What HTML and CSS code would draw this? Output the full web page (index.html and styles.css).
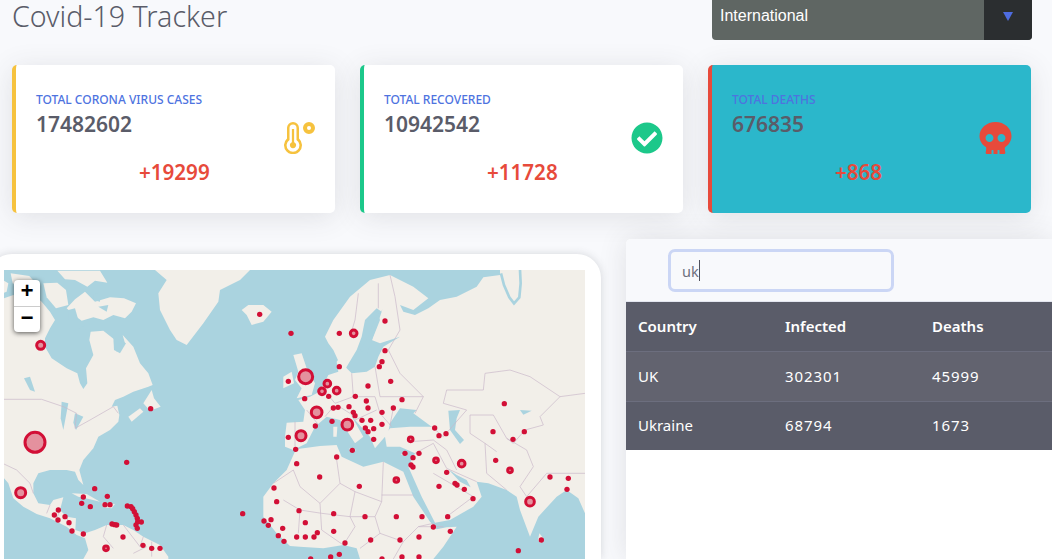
FILE: index.html
```html
<!DOCTYPE html>
<html lang="en">
<head>
<meta charset="utf-8">
<title>Covid-19 Tracker</title>
<link rel="stylesheet" href="styles.css">
</head>
<body>
<div class="page">
  <header class="topbar">
    <h1 class="title">Covid-19 Tracker</h1>
    <div class="picker"><span class="picker-label">International</span><span class="picker-arrow"><svg width="10" height="9" viewBox="0 0 10 9"><path d="M0 0H10L5 9Z"/></svg></span></div>
  </header>

  <section class="stats">
    <article class="stat stat-yellow">
      <div class="stat-text">
        <div class="stat-label">Total Corona Virus Cases</div>
        <div class="stat-value">17482602</div>
        <div class="stat-delta">+19299</div>
      </div>
      <svg class="stat-icon icon-yellow" viewBox="16 0 496 512"><path fill-rule="evenodd" d="M416 0a96 96 0 1 0 0 192a96 96 0 1 0 0-192zM416 64a32 32 0 1 1 0 64a32 32 0 1 1 0-64zM160 0a96 96 0 0 0-96 96V264A144 144 0 1 0 256 264V96A96 96 0 0 0 160 0zM160 40a56 56 0 0 1 56 56V288A102 102 0 1 1 104 288V96a56 56 0 0 1 56-56zM142 112h36V322a50 50 0 1 1-36 0z"/></svg>
    </article>
    <article class="stat stat-green">
      <div class="stat-text">
        <div class="stat-label">Total Recovered</div>
        <div class="stat-value">10942542</div>
        <div class="stat-delta">+11728</div>
      </div>
      <svg class="stat-icon icon-green" viewBox="0 0 512 512"><path d="M504 256c0 136.967-111.033 248-248 248S8 392.967 8 256 119.033 8 256 8s248 111.033 248 248zM227.314 387.314l184-184c6.248-6.248 6.248-16.379 0-22.627l-22.627-22.627c-6.248-6.249-16.379-6.249-22.628 0L216 308.118l-70.059-70.059c-6.248-6.248-16.379-6.248-22.628 0l-22.627 22.627c-6.248 6.248-6.248 16.379 0 22.627l104 104c6.249 6.249 16.379 6.249 22.628.001z"/></svg>
    </article>
    <article class="stat stat-red">
      <div class="stat-text">
        <div class="stat-label">Total Deaths</div>
        <div class="stat-value">676835</div>
        <div class="stat-delta">+868</div>
      </div>
      <svg class="stat-icon icon-red" viewBox="0 0 512 512"><path d="M256 0C114.6 0 0 100.3 0 224c0 70.1 36.9 132.6 94.5 173.7 9.6 6.9 15.2 18.1 13.5 29.9l-9.4 66.2c-1.4 9.6 6 18.2 15.7 18.2H192v-56c0-4.4 3.6-8 8-8h16c4.4 0 8 3.6 8 8v56h64v-56c0-4.4 3.6-8 8-8h16c4.4 0 8 3.6 8 8v56h77.7c9.7 0 17.1-8.6 15.7-18.2l-9.4-66.2c-1.7-11.7 3.8-23 13.5-29.9C475.1 356.6 512 294.1 512 224 512 100.3 397.4 0 256 0zm-96 320c-35.3 0-64-28.7-64-64s28.7-64 64-64 64 28.7 64 64-28.7 64-64 64zm192 0c-35.3 0-64-28.7-64-64s28.7-64 64-64 64 28.7 64 64-28.7 64-64 64z"/></svg>
    </article>
  </section>

  <section class="lower">
    <div class="map-card">
      <div class="map">
        <svg class="map-art" viewBox="12 90 1743 867" width="581" height="289">
          <g class="land">
            <path d="M12,175L40,165L70,180L95,160L125,185L150,215L165,240L150,265L135,295L135,320L155,355L200,385L232,400L240,430L250,447L262,430L258,385L280,345L268,300L272,275L310,272L345,300L350,335L375,310L368,285L400,320L420,370L445,400L458,435L445,440L400,455L370,470L345,480L335,500L352,497L358,525L355,545L330,570L295,590L280,625L250,660L238,690L250,735L235,720L225,695L200,690L150,690L115,700L100,730L100,760L115,790L150,795L160,780L190,772L180,810L200,830L228,835L226,870L255,880L285,870L320,855L370,855L400,870L430,890L480,915L505,950L505,957L250,957L265,930L255,895L230,885L200,860L150,835L110,822L70,800L40,775L25,730L12,715Z"/>
            <path d="M385,530L420,505L430,515L395,545Z"/>
            <path d="M430,490L455,450L462,475L482,500L450,512Z"/>
            <path d="M200,205L225,178L255,155L285,185L330,172L372,175L408,190L395,215L375,235L340,225L310,240L280,232L245,242L222,225Z"/>
            <path d="M172,92L300,92L322,128L285,122L262,140L225,120L195,118Z"/>
            <path d="M32,100L88,108L112,135L75,148L38,130Z"/>
            <path d="M12,122L25,130L20,155L12,158Z"/>
            <path d="M130,130L172,128L198,150L205,195L168,205L140,172Z"/>
            <path d="M465,90L750,90L720,120L660,150L655,185L610,250L560,315L530,300L510,270L480,210L475,160L500,120Z"/>
            <path d="M725,210L745,195L790,195L815,215L790,245L755,255L740,225Z"/>
            <path d="M215,760L260,762L300,785L270,778L235,770Z"/>
            <path d="M305,788L345,792L335,805L310,802Z"/>
            <path d="M850,410L875,395L882,430L850,445Z"/>
            <path d="M880,345L905,340L920,385L945,430L935,465L890,475L905,445L885,420L895,395Z"/>
          </g>
          <g class="land" transform="translate(900,0)">
            <path d="M-45,590L-40,548L10,545L15,510L-5,480L30,470L50,460L70,435L85,405L115,395L110,365L125,345L140,385L155,400L200,395L225,380L235,350L250,320L300,290L240,310L215,300L230,260L245,215L230,205L195,240L185,290L170,330L140,380L130,395L100,330L85,310L75,290L100,240L150,170L210,120L270,105L340,140L385,175L340,210L300,195L310,215L345,225L385,205L420,180L470,170L530,140L550,112L600,105L600,90L855,90L855,820L835,775L800,750L770,770L715,830L690,890L660,810L650,770L620,750L565,730L530,725L545,770L520,800L450,840L405,848L365,770L325,680L345,640L300,620L260,620L255,590L270,565L330,560L395,560L340,520L350,510L300,505L270,550L265,575L255,590L225,625L210,590L165,540L150,520L190,590L165,610L120,540L80,530L45,560L20,610L-20,630L-45,620Z"/>
            <path d="M-12,628L60,618L110,615L125,650L190,680L250,665L310,695L340,770L390,845L410,868L440,862L470,860L430,920L400,957L180,957L170,925L130,915L70,925L0,920L-30,918L-70,880L-110,830L-110,770L-80,730L-40,690Z"/>
            <path d="M718,880L730,895L722,910L714,900Z"/>
            <path d="M148,625L170,630L150,635Z"/>
            <path d="M100,560L112,560L110,590L100,590Z"/>
            <path d="M302,643L322,636L320,648Z"/>
          </g>
          <g class="water" transform="translate(900,0)">
            <path d="M480,510L445,512L450,570L480,612L492,600L465,570L470,535Z"/>
            <path d="M445,688L480,725L512,742L500,720L470,705Z"/>
            <path d="M180,330L200,300L232,215L240,240L220,290L200,345Z"/>
            <path d="M248,208L215,262L222,240Z"/>
            <path d="M660,510L695,512L670,524Z"/>
            <path class="water-line" d="M603,100L612,135L628,172L642,190L658,172L662,130L660,90"/>
          </g>
          <g class="water">
            <path d="M72,415L90,410L105,455L90,450Z"/>
            <path d="M185,485L205,490L190,570L182,535Z"/>
            <path d="M225,520L250,530L228,570L220,548Z"/>
            <path d="M340,292L378,310L360,340L342,330Z"/>
            <path d="M280,165L300,155L300,185L280,180Z"/>
            <path d="M235,265L270,250L255,270Z"/>
            <path d="M205,210L225,205L235,240L205,240Z"/>
            <path d="M295,200L325,195L320,215Z"/>
          </g>
          <g class="borders">
            <path d="M12,478H125L190,500L230,520L225,565L270,540L340,500L355,520"/>
            <path d="M12,672L50,690L90,730L100,760"/>
            <path d="M150,795L140,820M180,810L170,835M200,830L210,860"/>
            <path d="M320,855L310,890L340,925M370,855L420,920L430,890M455,905V950M400,940L440,920"/>
          </g>
          <g class="borders" transform="translate(900,0)">
            <path d="M175,160L165,240L150,290M235,130L235,205M270,105L285,170L300,270L265,330L300,400L370,470L345,520"/>
            <path d="M155,400L160,470L105,490M225,380L240,470L370,470M160,470L225,470L240,520L275,560M110,495L150,520M165,540L230,510M280,505L270,555"/>
            <path d="M395,560L430,590L500,510L430,490L440,450L550,450L555,400L630,390L690,410L780,470L855,460M780,470L720,530L730,555L675,570L640,610L620,595L580,525L510,525L510,580L555,610L590,635M555,610L560,700L620,750M620,595L680,630L700,680L660,740L680,770L740,700L855,700"/>
            <path d="M330,605L400,600L440,630L470,690M345,640L400,610L440,685L530,725M400,700L520,770M520,770L440,830"/>
            <path d="M110,660L120,730L60,790L0,740L-20,690M120,730L165,755L245,785L250,665M165,755L150,830L165,860M245,765H340M245,785L225,830L240,880L310,905L355,860L400,850M60,790L65,870M150,830L65,820L0,810L-50,780M-20,690L-80,730M0,810L-5,880M65,870L130,915M165,860L130,915M225,830L150,830M310,905L280,957M355,860L430,860M180,925L240,880"/>
            <path d="M-15,545L-15,620M20,510L60,560M80,460L105,490M75,530L105,495"/>
          </g>
          <g class="dots">
            <circle cx="779" cy="223" r="7"/><circle cx="873" cy="280" r="7"/><circle cx="865" cy="424" r="7"/><circle cx="452" cy="506" r="7"/><circle cx="380" cy="667" r="7"/><circle cx="284" cy="746" r="7"/><circle cx="322" cy="769" r="7"/><circle cx="250" cy="771" r="7"/><circle cx="245" cy="790" r="7"/><circle cx="271" cy="800" r="7"/><circle cx="315" cy="794" r="7"/><circle cx="330" cy="794" r="7"/><circle cx="175" cy="810" r="7"/><circle cx="163" cy="825" r="7"/><circle cx="174" cy="840" r="7"/><circle cx="195" cy="830" r="7"/><circle cx="207" cy="848" r="7"/><circle cx="216" cy="873" r="7"/><circle cx="250" cy="882" r="7"/><circle cx="336" cy="852" r="7"/><circle cx="344" cy="854" r="7"/><circle cx="350" cy="855" r="7"/><circle cx="369" cy="891" r="7"/><circle cx="429" cy="916" r="7"/><circle cx="455" cy="925" r="7"/><circle cx="480" cy="925" r="7"/><circle cx="382" cy="798" r="7"/><circle cx="393" cy="800" r="7"/><circle cx="398" cy="806" r="7"/><circle cx="403" cy="815" r="7"/><circle cx="408" cy="825" r="7"/><circle cx="412" cy="835" r="7"/><circle cx="424" cy="846" r="7"/><circle cx="408" cy="855" r="7"/><circle cx="412" cy="865" r="7"/><circle cx="413" cy="845" r="7"/><circle cx="728" cy="821" r="7"/><circle cx="822" cy="744" r="7"/><circle cx="830" cy="785" r="7"/><circle cx="792" cy="843" r="7"/><circle cx="813" cy="839" r="7"/><circle cx="805" cy="856" r="7"/><circle cx="848" cy="865" r="7"/><circle cx="835" cy="887" r="7"/><circle cx="852" cy="904" r="7"/><circle cx="890" cy="891" r="7"/><circle cx="865" cy="592" r="7"/><circle cx="887" cy="628" r="7"/><circle cx="890" cy="671" r="7"/><circle cx="897" cy="812" r="7"/>
          </g>
          <g class="dots" transform="translate(900,0)">
            <circle cx="255" cy="243" r="7"/><circle cx="118" cy="280" r="7"/><circle cx="255" cy="332" r="7"/><circle cx="246" cy="365" r="7"/><circle cx="238" cy="380" r="7"/><circle cx="118" cy="380" r="7"/><circle cx="272" cy="424" r="7"/><circle cx="204" cy="438" r="7"/><circle cx="86" cy="469" r="7"/><circle cx="14" cy="476" r="7"/><circle cx="166" cy="469" r="7"/><circle cx="199" cy="483" r="7"/><circle cx="306" cy="479" r="7"/><circle cx="280" cy="504" r="7"/><circle cx="204" cy="504" r="7"/><circle cx="147" cy="500" r="7"/><circle cx="100" cy="504" r="7"/><circle cx="114" cy="502" r="7"/><circle cx="160" cy="517" r="7"/><circle cx="165" cy="527" r="7"/><circle cx="246" cy="517" r="7"/><circle cx="186" cy="541" r="7"/><circle cx="212" cy="541" r="7"/><circle cx="96" cy="544" r="7"/><circle cx="46" cy="558" r="7"/><circle cx="196" cy="564" r="7"/><circle cx="246" cy="553" r="7"/><circle cx="221" cy="566" r="7"/><circle cx="204" cy="575" r="7"/><circle cx="221" cy="598" r="7"/><circle cx="404" cy="564" r="7"/><circle cx="417" cy="587" r="7"/><circle cx="438" cy="581" r="7"/><circle cx="157" cy="631" r="7"/><circle cx="110" cy="651" r="7"/><circle cx="315" cy="640" r="7"/><circle cx="357" cy="640" r="7"/><circle cx="339" cy="653" r="7"/><circle cx="333" cy="675" r="7"/><circle cx="339" cy="681" r="7"/><circle cx="59" cy="711" r="7"/><circle cx="178" cy="739" r="7"/><circle cx="440" cy="697" r="7"/><circle cx="417" cy="739" r="7"/><circle cx="465" cy="730" r="7"/><circle cx="471" cy="735" r="7"/><circle cx="493" cy="748" r="7"/><circle cx="519" cy="776" r="7"/><circle cx="750" cy="711" r="7"/><circle cx="805" cy="715" r="7"/><circle cx="801" cy="748" r="7"/><circle cx="613" cy="491" r="7"/><circle cx="579" cy="575" r="7"/><circle cx="673" cy="575" r="7"/><circle cx="639" cy="598" r="7"/><circle cx="587" cy="661" r="7"/><circle cx="101" cy="821" r="7"/><circle cx="16" cy="848" r="7"/><circle cx="195" cy="830" r="7"/><circle cx="289" cy="830" r="7"/><circle cx="366" cy="830" r="7"/><circle cx="443" cy="830" r="7"/><circle cx="400" cy="861" r="7"/><circle cx="451" cy="874" r="7"/><circle cx="101" cy="874" r="7"/><circle cx="52" cy="878" r="7"/><circle cx="16" cy="891" r="7"/><circle cx="42" cy="891" r="7"/><circle cx="135" cy="909" r="7"/><circle cx="212" cy="900" r="7"/><circle cx="300" cy="900" r="7"/><circle cx="357" cy="891" r="7"/><circle cx="118" cy="943" r="7"/><circle cx="92" cy="951" r="7"/><circle cx="32" cy="957" r="7"/><circle cx="246" cy="957" r="7"/><circle cx="306" cy="951" r="7"/><circle cx="357" cy="951" r="7"/><circle cx="724" cy="900" r="7"/><circle cx="655" cy="932" r="7"/>
          </g>
          <g class="rings">
            <circle cx="122" cy="316" r="12"/><circle cx="105" cy="607" r="30"/><circle cx="62" cy="758" r="15"/><circle cx="318" cy="925" r="7"/>
          </g>
          <g class="rings" transform="translate(900,0)">
            <circle cx="161" cy="280" r="10"/><circle cx="17" cy="410" r="21"/><circle cx="82" cy="431" r="10"/><circle cx="66" cy="454" r="10"/><circle cx="110" cy="452" r="10"/><circle cx="50" cy="517" r="16"/><circle cx="142" cy="554" r="16"/><circle cx="332" cy="598" r="7"/><circle cx="408" cy="661" r="7"/><circle cx="485" cy="671" r="10"/><circle cx="630" cy="691" r="7"/><circle cx="289" cy="720" r="7"/><circle cx="690" cy="785" r="13"/><circle cx="3" cy="587" r="15"/>
          </g>
        </svg>
        <div class="zoom"><span class="zoom-btn">+</span><span class="zoom-btn">−</span></div>
      </div>
    </div>

    <div class="panel">
      <div class="panel-head">
        <div class="search"><span>uk</span><span class="caret"></span></div>
      </div>
      <table class="table">
        <thead>
          <tr><th>Country</th><th>Infected</th><th>Deaths</th></tr>
        </thead>
        <tbody>
          <tr class="odd"><td>UK</td><td class="num">302301</td><td class="num">45999</td></tr>
          <tr class="last"><td>Ukraine</td><td class="num">68794</td><td class="num">1673</td></tr>
        </tbody>
      </table>
    </div>
  </section>
</div>
</body>
</html>
```

FILE: styles.css
```css
* { box-sizing: border-box; }
html, body { margin: 0; height: 559px; overflow: hidden; background: #f8f9fc; }
body { font-family: "Noto Sans", "Open Sans", sans-serif; color: #5a5c69; }
.page { width: 1052px; height: 559px; overflow: hidden; padding: 0 20px 0 12px; }

.topbar { display: flex; justify-content: space-between; height: 40px; margin-bottom: 25px; }
.title { margin: 0; font-size: 28.6px; line-height: 32px; font-weight: 300; color: #5a5c69; }
.picker { width: 320px; height: 40px; display: flex; justify-content: space-between; background: #5f6663; border-radius: 0 0 4px 4px; overflow: hidden; }
.picker-label { padding: 6px 8px; font: 16px/20px "Liberation Sans", sans-serif; color: #fff; }
.picker-arrow { width: 48px; background: #2b2e30; display: flex; align-items: center; justify-content: center; padding-bottom: 8px; }
.picker-arrow svg { fill: #4e6ce0; }

.stats { display: grid; grid-template-columns: repeat(3, 323px); gap: 25px; margin-bottom: 26px; }
.stat { height: 148px; display: flex; justify-content: space-between; padding: 28px 19px 0 20px; background: #fff; border-left: 4px solid; border-radius: 5px; box-shadow: 0 4px 28px rgba(58, 59, 69, .13); }
.stat-yellow { border-color: #f6c23e; }
.stat-green { border-color: #1cc88a; }
.stat-red { border-color: #e74a3b; background: #2bb7cb; }
.stat-label { font-size: 12px; line-height: 14px; font-weight: 500; text-transform: uppercase; color: #4e73df; }
.stat-value { font-size: 21px; line-height: 24px; margin-top: 5px; font-weight: 600; color: #5a5c69; }
.stat-delta { font-size: 20.6px; line-height: 24px; margin: 24px 0 0 103px; font-weight: 600; color: #e74a3b; }
.stat-icon { width: 32px; height: 32px; margin-top: 29px; }
.icon-yellow { fill: #f6c23e; width: 33px; }
.icon-green { fill: #1cc88a; margin-right: 1px; }
.icon-red { fill: #e74a3b; width: 33px; }

.lower { display: flex; align-items: flex-start; gap: 25px; margin: 0 -20px 0 -24px; }
.map-card { flex: 0 0 613px; margin-top: 15px; padding: 16px 16px 0; background: #fff; border-radius: 24px 24px 0 0; box-shadow: 0 0 8px rgba(58, 59, 69, .18); }
.map { position: relative; width: 581px; height: 289px; background: #aad3df; overflow: hidden; }
.map-art { display: block; }
.land path { fill: #f2efe9; stroke: none; }
.water path { fill: #aad3df; stroke: none; }
.water .water-line { fill: none; stroke: #aad3df; stroke-width: 8; }
.borders path { fill: none; stroke: #c9b6c9; stroke-width: 2; }
.dots circle { fill: #d20f36; r: 8px; }
.rings circle { fill: rgba(210, 15, 54, .42); stroke: #d20f36; stroke-width: 9; }
.zoom { position: absolute; left: 10px; top: 10px; width: 26px; display: flex; flex-direction: column; border-radius: 4px; background: #fff; box-shadow: 0 1px 5px rgba(0, 0, 0, .65); }
.zoom-btn { height: 26px; font: 700 22px/26px "Liberation Mono", monospace; text-align: center; color: #000; }
.zoom-btn + .zoom-btn { border-top: 1px solid #ccc; }

.panel { flex: 0 0 426px; height: 320px; background: #fff; border-radius: 5px 0 0 0; overflow: hidden; box-shadow: 0 0 28px rgba(58, 59, 69, .13); }
.panel-head { height: 63px; padding: 10px 0 0 42px; background: #f8f9fc; border-bottom: 1px solid #e3e6f0; }
.search { width: 226px; height: 43px; display: flex; align-items: center; padding-left: 11px; background: #f8f9fc; border: 3px solid #cbd6f5; border-radius: 7px; font-size: 14.5px; color: #6e707e; }
.caret { width: 1px; height: 21px; background: #50525e; }
.table { width: 426px; table-layout: fixed; border-collapse: collapse; color: #fff; background: #5a5c69; font-size: 15px; }
.table th, .table td { width: 147px; padding: 0 12px; text-align: left; line-height: 22px; }
.table th { height: 49px; font-size: 15px; font-weight: 600; }
.table td { height: 50px; border-top: 1px solid #6c6e7e; font-weight: 400; }
.table .last td { height: 49px; padding-bottom: 2px; }
.table .num { letter-spacing: .9px; }
.odd { background: #62636f; }
```
